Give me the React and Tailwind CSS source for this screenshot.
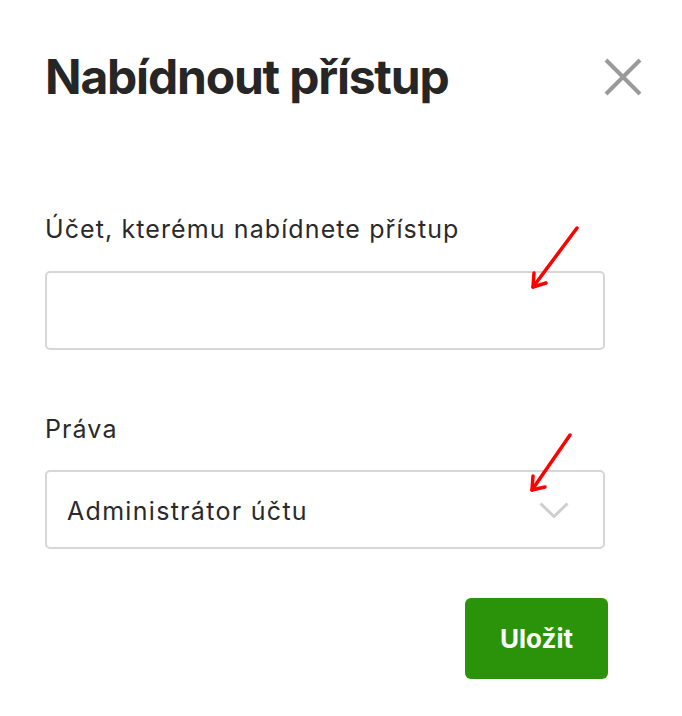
import React from 'react';

const font = { fontFamily: 'Inter, Roboto, "Liberation Sans", sans-serif' };

// red annotation arrows that lie over the form
const Arrow = ({ className, d, head }) => (
  <svg className={className} width="60" height="72" viewBox="0 0 60 72" fill="none">
    <path d={d} stroke="#ff0000" strokeWidth="3.5" strokeLinecap="round" />
    <path d={head} stroke="#ff0000" strokeWidth="3.5" strokeLinecap="round" strokeLinejoin="round" />
  </svg>
);

const App = () => {
  return (
    <div className="relative w-[682px] h-[716px] bg-white text-[#2a2a2a]" style={font}>
      <div className="pl-[45px] pr-[40px] pt-[48px]">
        {/* Header */}
        <div className="flex items-center justify-between">
          <h1 className="text-[48px] leading-[58px] font-bold tracking-[-1.2px] text-[#262626]">
            Nabídnout přístup
          </h1>
          <button className="w-[38px] h-[38px] flex items-center justify-center">
            <svg width="38" height="38" viewBox="0 0 38 38">
              <path d="M2 2 L36 36 M36 2 L2 36" stroke="#9a9a9a" strokeWidth="4" />
            </svg>
          </button>
        </div>

        {/* Form */}
        <div className="mt-[108px] w-[560px]">
          <label className="block text-[25px] leading-[30px] tracking-[1.1px]">
            Účet, kterému nabídnete přístup
          </label>
          <input className="mt-[27px] block w-full h-[79px] border-2 border-[#d6d6d6] rounded-[5px] px-5 text-[25px] outline-none" />

          <label className="block mt-[64px] text-[25px] leading-[30px] tracking-[1.1px]">Práva</label>
          <div className="mt-[26px] h-[79px] border-2 border-[#d6d6d6] rounded-[5px] flex items-center justify-between pl-[20px] pr-[34px]">
            <span className="mt-[4px] text-[25px] tracking-[1.3px]">Administrátor účtu</span>
            <svg width="30" height="16" viewBox="0 0 30 16">
              <path d="M1.5 1.5 L15 14.5 L28.5 1.5" stroke="#cfcfcf" strokeWidth="3" fill="none" />
            </svg>
          </div>

          <div className="flex justify-end mt-[49px] -mr-[3px]">
            <button className="w-[143px] h-[81px] rounded-[6px] bg-[#2a930a] text-white text-[26px] font-bold">
              Uložit
            </button>
          </div>
        </div>
      </div>

      <Arrow className="absolute left-[525px] top-[222px]" d="M52 6 L8 65" head="M9 51 L8 65 L21 61" />
      <Arrow className="absolute left-[524px] top-[429px]" d="M46 6 L8 61" head="M9 47 L8 61 L21 58" />
    </div>
  );
};

export default App;
